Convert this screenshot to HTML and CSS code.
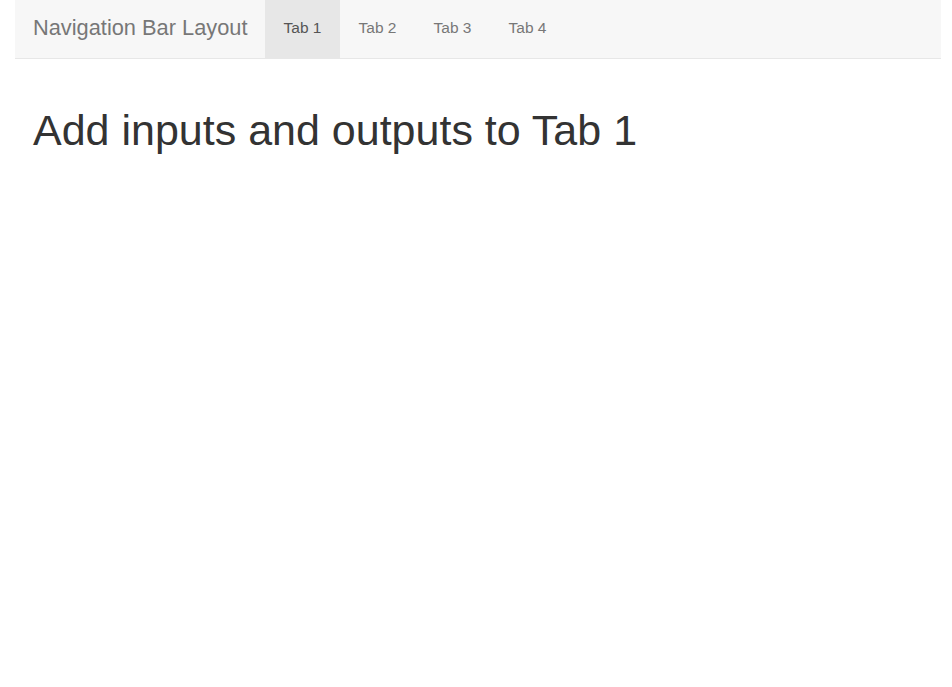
FILE: index.html
```html
<!DOCTYPE html>
<html lang="en">
<head>
<meta charset="utf-8">
<title>Navigation Bar Layout</title>
<link rel="stylesheet" href="styles.css">
</head>
<body>
<nav class="navbar">
  <span class="brand">Navigation Bar Layout</span>
  <ul class="tabs">
    <li class="tab active">Tab 1</li>
    <li class="tab">Tab 2</li>
    <li class="tab">Tab 3</li>
    <li class="tab">Tab 4</li>
  </ul>
</nav>
<main class="content">
  <h1 class="title">Add inputs and outputs to Tab 1</h1>
</main>
</body>
</html>
```

FILE: styles.css
```css
html, body {
  margin: 0;
  padding: 0;
  background: #ffffff;
  font-family: "Liberation Sans", Arial, sans-serif;
  color: #333333;
}

.navbar {
  display: flex;
  align-items: stretch;
  height: 58px;
  margin: 0 11px 0 15px;
  background: #f7f7f7;
  border-bottom: 1px solid #e7e7e7;
}

.brand {
  width: 250px;
  padding-left: 18px;
  box-sizing: border-box;
  font-size: 21.8px;
  line-height: 55px;
  color: #777777;
  white-space: nowrap;
}

.tabs {
  display: flex;
  list-style: none;
  margin: 0;
  padding: 0;
}

.tab {
  width: 75px;
  text-align: center;
  font-size: 15.5px;
  line-height: 55px;
  color: #777777;
}

.tab.active {
  background: #e7e7e7;
  color: #555555;
}

.content {
  padding: 48px 33px 0;
}

.title {
  margin: 0;
  font-size: 43px;
  font-weight: 400;
  line-height: 1.1;
  color: #333333;
}
```
